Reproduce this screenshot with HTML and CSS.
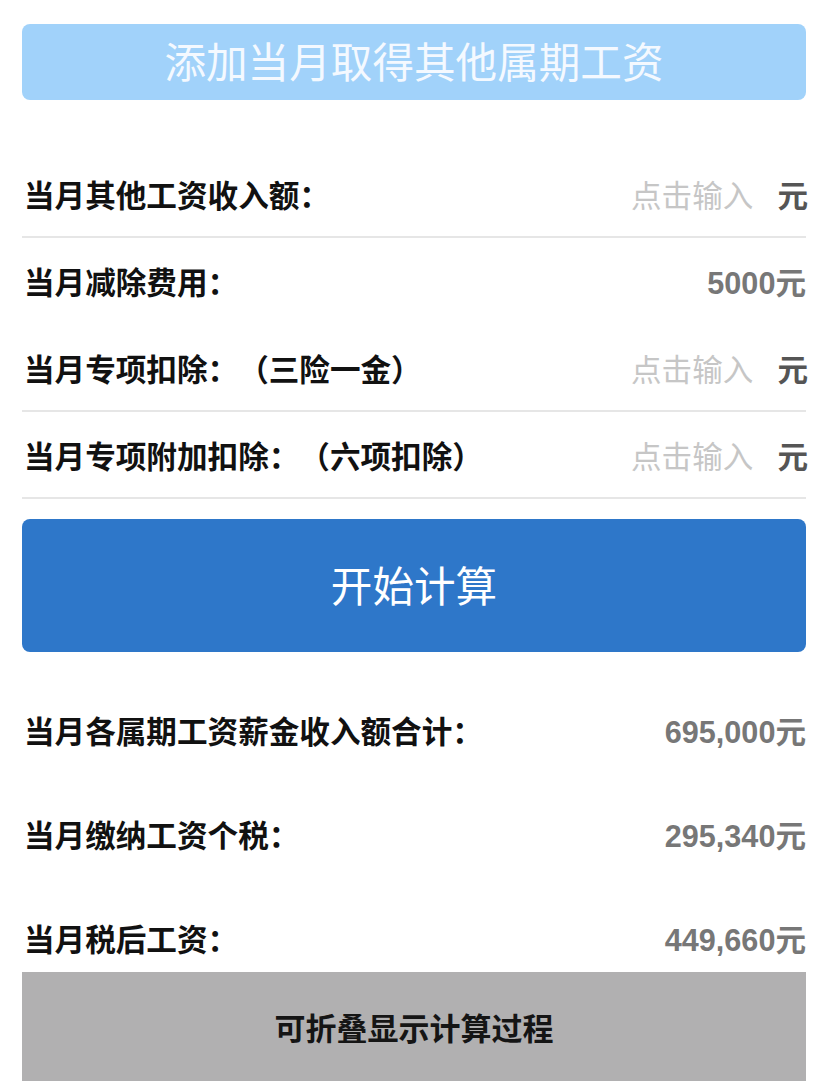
FILE: index.html
```html
<!DOCTYPE html>
<html lang="zh-CN">
<head>
<meta charset="utf-8">
<title>工资计算</title>
<link rel="stylesheet" href="styles.css">
</head>
<body>
<main class="page">
  <div class="btn btn-add">添加当月取得其他属期工资</div>

  <section class="form">
    <div class="row">
      <span class="label">当月其他工资收入额：</span>
      <span class="input"><span class="placeholder">点击输入</span><span class="unit">元</span></span>
    </div>
    <div class="row row-plain">
      <span class="label">当月减除费用：</span>
      <span class="value">5000元</span>
    </div>
    <div class="row">
      <span class="label">当月专项扣除：（三险一金）</span>
      <span class="input"><span class="placeholder">点击输入</span><span class="unit">元</span></span>
    </div>
    <div class="row">
      <span class="label">当月专项附加扣除：（六项扣除）</span>
      <span class="input"><span class="placeholder">点击输入</span><span class="unit">元</span></span>
    </div>
  </section>

  <div class="btn btn-calc">开始计算</div>

  <section class="results">
    <div class="result">
      <span class="label">当月各属期工资薪金收入额合计：</span>
      <span class="value">695,000元</span>
    </div>
    <div class="result">
      <span class="label">当月缴纳工资个税：</span>
      <span class="value">295,340元</span>
    </div>
    <div class="result">
      <span class="label">当月税后工资：</span>
      <span class="value">449,660元</span>
    </div>
  </section>

  <div class="fold">可折叠显示计算过程</div>
</main>
</body>
</html>
```

FILE: styles.css
```css
html, body {
  margin: 0;
  padding: 0;
  background: #ffffff;
}

body {
  font-family: "Liberation Sans", "Noto Sans CJK SC", sans-serif;
  color: #111111;
  text-spacing-trim: space-all;
}

.page {
  display: flex;
  flex-direction: column;
  padding: 24px 22px 0 22px;
}

.btn {
  display: flex;
  align-items: center;
  justify-content: center;
  color: #ffffff;
  font-weight: 400;
  border-radius: 8px;
  box-sizing: border-box;
}

.btn-add {
  height: 76px;
  padding-bottom: 5px;
  background: #a1d2fa;
  font-size: 41.6px;
  color: #f4f9ff;
}

.form {
  display: flex;
  flex-direction: column;
  margin-top: 51px;
}

.row {
  display: flex;
  align-items: center;
  justify-content: space-between;
  height: 85px;
  border-bottom: 2px solid #e6e6e6;
}

.row-plain {
  border-bottom-color: transparent;
}

.label {
  font-size: 30.6px;
  font-weight: 700;
  color: #111111;
  padding-left: 2px;
}

.input {
  display: flex;
  align-items: center;
  font-size: 30.6px;
  margin-right: -2px;
}

.placeholder {
  color: #c6c6c6;
  font-weight: 400;
  margin-right: 24px;
}

.unit {
  color: #555555;
  font-weight: 700;
}

.value {
  font-size: 30.6px;
  font-weight: 700;
  color: #777777;
}

.btn-calc {
  margin-top: 20px;
  height: 133px;
  padding-bottom: 3px;
  background: #2e77c9;
  font-size: 41.6px;
}

.results {
  display: flex;
  flex-direction: column;
  gap: 64px;
  margin-top: 58px;
}

.result {
  display: flex;
  align-items: center;
  justify-content: space-between;
  height: 40px;
}

.fold {
  margin-top: 14px;
  height: 109px;
  background: #b1b0b1;
  display: flex;
  align-items: center;
  justify-content: center;
  font-size: 31px;
  font-weight: 700;
  color: #151515;
}
```
